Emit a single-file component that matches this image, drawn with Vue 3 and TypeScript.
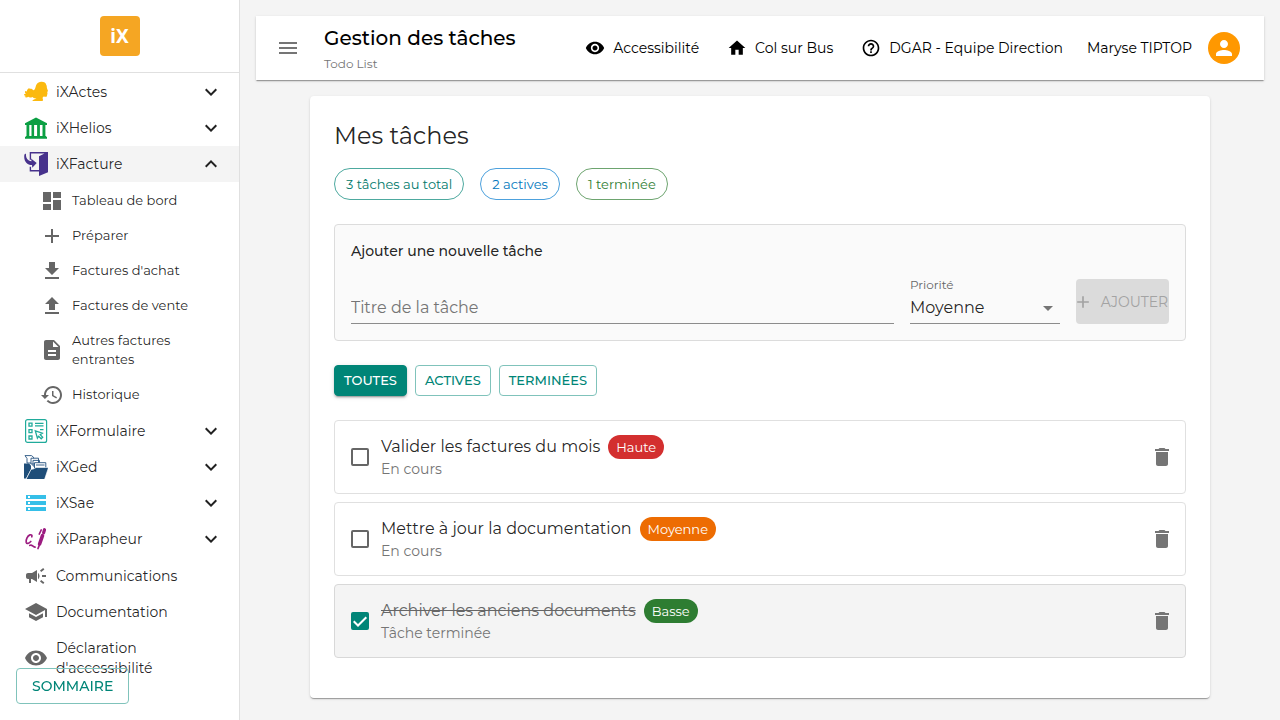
<script setup lang="ts">
import { computed, ref } from 'vue'

type Priority = 'Haute' | 'Moyenne' | 'Basse'
type Filter = 'all' | 'active' | 'done'

interface Task {
  id: number
  title: string
  priority: Priority
  done: boolean
}

const paths = {
  menu: 'M3 18h18v-2H3v2zm0-5h18v-2H3v2zm0-7v2h18V6H3z',
  dashboard: 'M3 13h8V3H3v10zm0 8h8v-6H3v6zm10 0h8V11h-8v10zm0-18v6h8V3h-8z',
  add: 'M19 13h-6v6h-2v-6H5v-2h6V5h2v6h6v2z',
  download: 'M19 9h-4V3H9v6H5l7 7 7-7zM5 18v2h14v-2H5z',
  upload: 'M5 20h14v-2H5v2zm0-10h4v6h6v-6h4l-7-7-7 7z',
  description:
    'M14 2H6c-1.1 0-1.99.9-1.99 2L4 20c0 1.1.89 2 1.99 2H18c1.1 0 2-.9 2-2V8l-6-6zm2 16H8v-2h8v2zm0-4H8v-2h8v2zm-3-5V3.5L18.5 9H13z',
  history:
    'M13 3c-4.97 0-9 4.03-9 9H1l3.89 3.89.07.14L9 12H6c0-3.87 3.13-7 7-7s7 3.13 7 7-3.13 7-7 7c-1.93 0-3.68-.79-4.94-2.06l-1.42 1.42C8.27 19.99 10.51 21 13 21c4.97 0 9-4.03 9-9s-4.03-9-9-9zm-1 5v5l4.28 2.54.72-1.21-3.5-2.08V8H12z',
  campaign:
    'M18 11v2h4v-2h-4zm-2 6.61c.96.71 2.21 1.65 3.2 2.39.4-.53.8-1.07 1.2-1.6-.99-.74-2.24-1.68-3.2-2.4-.4.54-.8 1.08-1.2 1.61zM20.4 5.6c-.4-.53-.8-1.07-1.2-1.6-.99.74-2.24 1.68-3.2 2.4.4.53.8 1.07 1.2 1.6.96-.72 2.21-1.65 3.2-2.4zM4 9c-1.1 0-2 .9-2 2v2c0 1.1.9 2 2 2h1v4h2v-4h1l5 3V6L8 9H4zm11.5 3c0-1.33-.58-2.53-1.5-3.35v6.69c.92-.81 1.5-2.01 1.5-3.34z',
  school: 'M5 13.18v4L12 21l7-3.82v-4L12 17l-7-3.82zM12 3L1 9l11 6 9-4.91V17h2V9L12 3z',
  eye: 'M12 4.5C7 4.5 2.73 7.61 1 12c1.73 4.39 6 7.5 11 7.5s9.27-3.11 11-7.5c-1.73-4.39-6-7.5-11-7.5zM12 17c-2.76 0-5-2.24-5-5s2.24-5 5-5 5 2.24 5 5-2.24 5-5 5zm0-8c-1.66 0-3 1.34-3 3s1.34 3 3 3 3-1.34 3-3-1.34-3-3-3z',
  home: 'M10 20v-6h4v6h5v-8h3L12 3 2 12h3v8z',
  help: 'M11 18h2v-2h-2v2zm1-16C6.48 2 2 6.48 2 12s4.48 10 10 10 10-4.48 10-10S17.52 2 12 2zm0 18c-4.41 0-8-3.59-8-8s3.59-8 8-8 8 3.59 8 8-3.59 8-8 8zm0-14c-2.21 0-4 1.79-4 4h2c0-1.1.9-2 2-2s2 .9 2 2c0 2-3 1.75-3 5h2c0-2.25 3-2.5 3-5 0-2.21-1.79-4-4-4z',
  person: 'M12 12c2.21 0 4-1.79 4-4s-1.79-4-4-4-4 1.79-4 4 1.79 4 4 4zm0 2c-2.67 0-8 1.34-8 4v2h16v-2c0-2.66-5.33-4-8-4z',
  trash: 'M6 19c0 1.1.9 2 2 2h8c1.1 0 2-.9 2-2V7H6v12zM19 4h-3.5l-1-1h-5l-1 1H5v2h14V4z',
  down: 'M7.41 8.59 12 13.17l4.59-4.58L18 10l-6 6-6-6 1.41-1.41z',
  up: 'M7.41 15.41 12 10.83l4.59 4.58L18 14l-6-6-6 6 1.41 1.41z',
  arrowDrop: 'M7 10l5 5 5-5z',
}

const modules = [
  { id: 'actes', label: 'iXActes' },
  { id: 'helios', label: 'iXHelios' },
  { id: 'facture', label: 'iXFacture' },
  { id: 'formulaire', label: 'iXFormulaire' },
  { id: 'ged', label: 'iXGed' },
  { id: 'sae', label: 'iXSae' },
  { id: 'parapheur', label: 'iXParapheur' },
]

const factureLinks = [
  { label: 'Tableau de bord', icon: paths.dashboard },
  { label: 'Préparer', icon: paths.add },
  { label: "Factures d'achat", icon: paths.download },
  { label: 'Factures de vente', icon: paths.upload },
  { label: 'Autres factures entrantes', icon: paths.description },
  { label: 'Historique', icon: paths.history },
]

const generalLinks = [
  { label: 'Communications', icon: paths.campaign },
  { label: 'Documentation', icon: paths.school },
  { label: "Déclaration d'accessibilité", icon: paths.eye },
]

const topLinks = [
  { label: 'Accessibilité', icon: paths.eye },
  { label: 'Col sur Bus', icon: paths.home },
  { label: 'DGAR - Equipe Direction', icon: paths.help },
]

const filters: { id: Filter; label: string }[] = [
  { id: 'all', label: 'TOUTES' },
  { id: 'active', label: 'ACTIVES' },
  { id: 'done', label: 'TERMINÉES' },
]

const priorities: Priority[] = ['Basse', 'Moyenne', 'Haute']

const factureOpen = ref(true)
const filter = ref<Filter>('all')
const newTitle = ref('')
const newPriority = ref<Priority>('Moyenne')
const tasks = ref<Task[]>([
  { id: 1, title: 'Valider les factures du mois', priority: 'Haute', done: false },
  { id: 2, title: 'Mettre à jour la documentation', priority: 'Moyenne', done: false },
  { id: 3, title: 'Archiver les anciens documents', priority: 'Basse', done: true },
])

const doneCount = computed(() => tasks.value.filter((t) => t.done).length)
const activeCount = computed(() => tasks.value.length - doneCount.value)
const visibleTasks = computed(() =>
  tasks.value.filter((t) => filter.value === 'all' || (filter.value === 'done') === t.done),
)

function toggleModule(id: string) {
  if (id === 'facture') factureOpen.value = !factureOpen.value
}

function addTask() {
  const title = newTitle.value.trim()
  if (!title) return
  tasks.value.push({ id: Date.now(), title, priority: newPriority.value, done: false })
  newTitle.value = ''
}

function removeTask(id: number) {
  tasks.value = tasks.value.filter((t) => t.id !== id)
}
</script>

<template>
  <div class="page">
    <aside class="sidebar">
      <div class="brand"><span class="logo">iX</span></div>
      <nav aria-label="Modules">
        <ul class="nav-list modules">
          <li v-for="m in modules" :key="m.id">
            <button
              type="button"
              class="nav-item"
              :class="{ selected: m.id === 'facture' && factureOpen }"
              @click="toggleModule(m.id)"
            >
              <svg v-if="m.id === 'actes'" class="icon" viewBox="0 0 24 24" aria-hidden="true">
                <path
                  fill="#fbb90f"
                  d="M11.500 7.200C12 4 14.300 1.900 17 1.800C20 1.600 21.800 2.900 22.300 4.900C23.100 6 22.600 7 23 8.300L24 11L23.200 11.900L23.500 13.200L22.900 15.900C22.500 17.300 21.300 16.800 19.900 16.600C18.600 17 18.300 18.300 19 19.400L18.700 21H8.300L9 20L12.500 18.200C10.500 18.500 9.300 17.900 8.500 16.900C7 17.600 5.300 18 4.300 16.800C3.200 17.800 1.400 17.700 .6 16.700L2 16C.8 16.100 -.1 15.200 0 14.300L1.900 13.700C.8 13 .7 11.700 1.400 10.900L2.800 11.400C3 9.600 4 8.300 5.500 8L5.500 9C7 8.300 8.500 9 9.300 10.300C10.500 9.800 11.200 8.800 11.500 7.200Z"
                />
              </svg>
              <svg v-else-if="m.id === 'helios'" class="icon" viewBox="0 0 24 24" aria-hidden="true">
                <path
                  fill="#0b9f43"
                  d="M12 1.500 23 7.300V9H1V7.300ZM2.500 9H5.300V20H2.500ZM7.500 9H10.100V20H7.500ZM13.100 9H15.900V20H13.100ZM18.500 9H21.400V20H18.500ZM1.700 20H22.300V21H23V22.700H1V21H1.700Z"
                />
              </svg>
              <svg v-else-if="m.id === 'facture'" class="icon" viewBox="0 0 24 24" aria-hidden="true">
                <path fill="#47328c" d="M5.700 0H24V20.200L15 24V19.500H5.700V14.700H7.100V18.100H15V4.300L20.500 1.400H7.100V7.800H5.700Z" />
                <path
                  fill="#47328c"
                  d="M.4 2.400 2 1.500C1.700 5.800 3.200 8.600 7.500 9.200L7 6.600 12.700 10.900 8.300 15.800 8 13.100C2.600 12.700-.6 8.800.4 2.400Z"
                />
              </svg>
              <svg v-else-if="m.id === 'formulaire'" class="icon" viewBox="0 0 24 24" aria-hidden="true">
                <g fill="none" stroke="#20ab9b">
                  <rect x="1.600" y=".6" width="21" height="22.800" rx="2" stroke-width="1.200" />
                  <path d="M5 4.200h3v3H5ZM5 10.600h3v3H5ZM5 17h3v3H5Z" stroke-width="1.300" />
                  <path d="M11 4.400h8.500M11 6.900h8.500M16 10.600h3.500" stroke-width="1.100" />
                  <path d="M11.300 11.800 18.400 14.200 16.200 15.700 18.700 18.300 17.200 19.800 14.700 17.200 13.400 19.200Z" stroke-width="1.300" />
                </g>
              </svg>
              <svg v-else-if="m.id === 'ged'" class="icon" viewBox="0 0 24 24" aria-hidden="true">
                <path fill="#fff" stroke="#24517f" stroke-width=".9" d="M1 .6H7.500L9.500 2.200V8H3V3.500Z" />
                <path fill="#fff" stroke="#24517f" stroke-width=".9" d="M7 3.200H14.500V9H7ZM9 5.400H15.500V11H9Z" />
                <path fill="#1f4e79" d="M0 8.500H5L7 10.500V14L2 23.400H0Z" />
                <path fill="#fff" stroke="#24517f" stroke-width=".9" d="M10.500 7.700H21.800V14H10.500Z" />
                <path stroke="#24517f" stroke-width=".9" d="M12 10H20.500" />
                <path fill="#1f4e79" stroke="#fff" stroke-width=".6" d="M7 14.500 10 13.800 12 12.500H24.500L20.500 24.500H2Z" />
              </svg>
              <svg v-else-if="m.id === 'sae'" class="icon" viewBox="0 0 24 24" aria-hidden="true">
                <path
                  fill="#35bfe8"
                  fill-rule="evenodd"
                  d="M2 4H22V8H2ZM4 5V7H6V5ZM2 10H22V14H2ZM4 11V13H6V11ZM2 16H22V20H2ZM4 17V19H6V17Z"
                />
              </svg>
              <svg v-else class="icon" viewBox="0 0 24 24" aria-hidden="true">
                <g fill="none" stroke="#9c1c80" stroke-linecap="round" stroke-linejoin="round">
                  <path
                    stroke-width="1.700"
                    d="M7.800 9.800C8.300 8.200 7.500 7.400 6 7.900C3.300 9 1.700 12.700 2.200 15.200C2.700 17.300 4.700 16.600 6.800 14.500M5.800 18.400C7.800 16.800 8.500 19.600 11 20.200"
                  />
                  <path stroke-width="3.200" d="M20.500 2.700 19.600 5.700" />
                  <path stroke-width="3.600" d="M18.500 8.600 15.600 17" />
                  <path stroke-width="1.700" d="M15.200 18.500 14 21.500M17.200 3 15.300 7" />
                </g>
              </svg>
              <span class="nav-label">{{ m.label }}</span>
              <svg class="icon chevron" viewBox="0 0 24 24" aria-hidden="true">
                <path :d="m.id === 'facture' && factureOpen ? paths.up : paths.down" />
              </svg>
            </button>
            <ul v-if="m.id === 'facture' && factureOpen" class="nav-list sub-list">
              <li v-for="link in factureLinks" :key="link.label">
                <a href="#" class="sub-item">
                  <svg class="icon" viewBox="0 0 24 24" aria-hidden="true"><path :d="link.icon" /></svg>
                  <span class="nav-label">{{ link.label }}</span>
                </a>
              </li>
            </ul>
          </li>
        </ul>
        <ul class="nav-list general">
          <li v-for="link in generalLinks" :key="link.label">
            <a href="#" class="nav-item">
              <svg class="icon" viewBox="0 0 24 24" aria-hidden="true"><path :d="link.icon" /></svg>
              <span class="nav-label">{{ link.label }}</span>
            </a>
          </li>
        </ul>
      </nav>
    </aside>

    <button type="button" class="summary">SOMMAIRE</button>

    <div class="content">
      <header class="topbar">
        <button type="button" class="icon-button" aria-label="Menu">
          <svg class="icon" viewBox="0 0 24 24" aria-hidden="true"><path :d="paths.menu" /></svg>
        </button>
        <div class="heading">
          <h1>Gestion des tâches</h1>
          <p>Todo List</p>
        </div>
        <div class="top-links">
          <a v-for="link in topLinks" :key="link.label" href="#" class="top-link">
            <svg class="icon small" viewBox="0 0 24 24" aria-hidden="true"><path :d="link.icon" /></svg>
            <span>{{ link.label }}</span>
          </a>
        </div>
        <a href="#" class="user">
          <span>Maryse TIPTOP</span>
          <span class="avatar">
            <svg class="icon" viewBox="0 0 24 24" aria-hidden="true"><path :d="paths.person" /></svg>
          </span>
        </a>
      </header>

      <main class="card">
        <h2>Mes tâches</h2>
        <div class="stats">
          <span class="stat total">{{ tasks.length }} tâches au total</span>
          <span class="stat active">{{ activeCount }} actives</span>
          <span class="stat done">{{ doneCount }} terminée</span>
        </div>

        <form class="add-form" @submit.prevent="addTask">
          <h3>Ajouter une nouvelle tâche</h3>
          <div class="fields">
            <input
              v-model="newTitle"
              class="field title-field"
              type="text"
              placeholder="Titre de la tâche"
              aria-label="Titre de la tâche"
            />
            <div class="priority">
              <label for="priority">Priorité</label>
              <div class="select-wrap">
                <select id="priority" v-model="newPriority" class="field">
                  <option v-for="p in priorities" :key="p">{{ p }}</option>
                </select>
                <svg class="icon" viewBox="0 0 24 24" aria-hidden="true"><path :d="paths.arrowDrop" /></svg>
              </div>
            </div>
            <button type="submit" class="add-button" :disabled="!newTitle.trim()">
              <svg class="icon small" viewBox="0 0 24 24" aria-hidden="true"><path :d="paths.add" /></svg>
              <span>AJOUTER</span>
            </button>
          </div>
        </form>

        <div class="filters">
          <button
            v-for="f in filters"
            :key="f.id"
            type="button"
            :class="{ current: filter === f.id }"
            :aria-pressed="filter === f.id"
            @click="filter = f.id"
          >
            {{ f.label }}
          </button>
        </div>

        <ul class="tasks">
          <li v-for="task in visibleTasks" :key="task.id" class="task" :class="{ finished: task.done }">
            <span class="check">
              <input :id="`task-${task.id}`" v-model="task.done" type="checkbox" />
              <svg v-if="task.done" viewBox="0 0 18 18" aria-hidden="true">
                <path d="M2.700 9.300 7 13.500 15.300 5.200" fill="none" stroke="#fff" stroke-width="2" />
              </svg>
            </span>
            <div class="task-text">
              <div class="task-head">
                <label :for="`task-${task.id}`">{{ task.title }}</label>
                <span class="badge" :class="task.priority.toLowerCase()">{{ task.priority }}</span>
              </div>
              <p>{{ task.done ? 'Tâche terminée' : 'En cours' }}</p>
            </div>
            <button type="button" class="icon-button" aria-label="Supprimer" @click="removeTask(task.id)">
              <svg class="icon" viewBox="0 0 24 24" aria-hidden="true"><path :d="paths.trash" /></svg>
            </button>
          </li>
        </ul>
      </main>
    </div>
  </div>
</template>

<style>
body {
  margin: 0;
  background: #f4f4f4;
}
</style>

<style scoped>
.page {
  display: flex;
  min-height: 100vh;
  background: #f4f4f4;
  color: rgba(0, 0, 0, 0.87);
  font-family: Montserrat, Inter, 'Open Sans', sans-serif;
  font-size: 14px;
}
.page * {
  box-sizing: border-box;
}
h1,
h2,
h3,
p,
ul {
  margin: 0;
  padding: 0;
}
ul {
  list-style: none;
}
a {
  color: inherit;
  text-decoration: none;
}
button,
input,
select {
  margin: 0;
  padding: 0;
  border: 0;
  border-radius: 0;
  background: none;
  color: inherit;
  font: inherit;
}
button {
  cursor: pointer;
}
.icon {
  display: block;
  flex: none;
  width: 24px;
  height: 24px;
  fill: currentColor;
}
.icon.small {
  width: 20px;
  height: 20px;
}

.sidebar {
  flex: none;
  width: 240px;
  border-right: 1px solid #e0e0e0;
  background: #fff;
}
.brand {
  display: flex;
  justify-content: center;
  padding: 16px;
  border-bottom: 1px solid #e0e0e0;
}
.logo {
  display: grid;
  place-items: center;
  width: 40px;
  height: 40px;
  border-radius: 4px;
  background: #f5a623;
  color: #fff;
  font-family: 'Noto Sans', 'Open Sans', sans-serif;
  font-size: 19px;
  font-weight: 700;
  line-height: 24px;
}
.modules {
  padding-top: 1px;
}
.general {
  padding-top: 1px;
}
.nav-item {
  display: flex;
  align-items: center;
  gap: 8px;
  width: 100%;
  padding: 8px 16px 8px 24px;
  line-height: 20px;
  text-align: left;
}
.nav-item .icon {
  margin: -2px 0;
}
.nav-item.selected {
  background: #f4f4f4;
}
.nav-label {
  flex: 1;
}
a.nav-item .icon,
.sub-item .icon {
  color: #666;
}
.sub-list {
  padding: 1px 0;
}
.sub-item {
  display: flex;
  align-items: center;
  gap: 8px;
  padding: 8px 48px 8px 40px;
  font-size: 13px;
  line-height: 19px;
}
.sub-item .icon {
  margin: -3px 0;
}
.summary {
  position: fixed;
  left: 16px;
  bottom: 16px;
  padding: 0 15px;
  border: 1px solid #80c3bb;
  border-radius: 4px;
  color: #008577;
  font-weight: 500;
  line-height: 34px;
}

.content {
  flex: 1;
  min-width: 0;
  padding: 16px;
}
.topbar {
  display: flex;
  align-items: center;
  height: 64px;
  padding: 0 24px 0 20px;
  background: #fff;
  box-shadow: 0 2px 1px -1px rgba(0, 0, 0, 0.2), 0 1px 1px rgba(0, 0, 0, 0.14), 0 1px 3px rgba(0, 0, 0, 0.12);
  color: #000;
}
.icon-button {
  color: #757575;
}
.heading {
  flex: 1;
  margin-left: 24px;
  padding-top: 2px;
}
h1 {
  font-size: 20px;
  font-weight: 500;
  line-height: 28px;
}
.heading p {
  margin-top: 2px;
  color: #757575;
  font-size: 12px;
  line-height: 20px;
}
.top-links {
  display: flex;
  gap: 28px;
}
.top-link,
.user {
  display: flex;
  align-items: center;
  gap: 8px;
}
.user {
  gap: 16px;
  margin-left: 24px;
}
.avatar {
  display: grid;
  place-items: center;
  width: 32px;
  height: 32px;
  border-radius: 50%;
  background: #ff9800;
  color: #fff;
}

.card {
  max-width: 900px;
  margin: 16px auto 0;
  padding: 24px 24px 40px;
  border-radius: 4px;
  background: #fff;
  box-shadow: 0 2px 1px -1px rgba(0, 0, 0, 0.2), 0 1px 1px rgba(0, 0, 0, 0.14), 0 1px 3px rgba(0, 0, 0, 0.12);
}
h2 {
  font-size: 24px;
  font-weight: 400;
  line-height: 32px;
}
.stats {
  display: flex;
  gap: 16px;
  margin-top: 16px;
}
.stat {
  padding: 0 11px;
  border: 1px solid;
  border-radius: 16px;
  font-size: 13px;
  line-height: 30px;
}
.stat.total {
  border-color: #4da99f;
  color: #00796b;
}
.stat.active {
  border-color: #4da1dd;
  color: #0277bd;
}
.stat.done {
  border-color: #6da46f;
  color: #2e7d32;
}

.add-form {
  margin-top: 24px;
  padding: 16px;
  border: 1px solid #dcdcdc;
  border-radius: 4px;
  background: #fafafa;
}
h3 {
  font-size: 14px;
  font-weight: 500;
  line-height: 21px;
}
.fields {
  display: flex;
  align-items: flex-end;
  gap: 16px;
  margin-top: 16px;
}
.field {
  width: 100%;
  height: 32px;
  border-bottom: 1px solid #8c8c8c;
  font-size: 16px;
  outline: 0;
}
.title-field {
  flex: 1;
  min-width: 0;
}
.title-field::placeholder {
  color: #757575;
  opacity: 1;
}
.priority {
  flex: none;
  width: 150px;
}
.priority label {
  display: block;
  color: #666;
  font-size: 12px;
  line-height: 14px;
}
.select-wrap {
  display: grid;
  align-items: center;
}
.select-wrap > * {
  grid-area: 1 / 1;
}
.select-wrap select {
  appearance: none;
}
.select-wrap .icon {
  justify-self: end;
  color: #757575;
  pointer-events: none;
}
.add-button {
  display: flex;
  flex: none;
  align-items: center;
  justify-content: center;
  gap: 8px;
  width: 93px;
  height: 45px;
  border-radius: 4px;
  background: #00897b;
  color: #fff;
}
.add-button .icon {
  margin-left: -4px;
}
.add-button:disabled {
  background: #dbdbdb;
  color: #a3a3a3;
  cursor: default;
}

.filters {
  display: flex;
  gap: 8px;
  margin-top: 24px;
}
.filters button {
  padding: 0 9px;
  border: 1px solid #80c3bb;
  border-radius: 4px;
  color: #008577;
  font-size: 13px;
  font-weight: 500;
  line-height: 29px;
}
.filters .current {
  border-color: #008577;
  background: #008577;
  box-shadow: 0 3px 1px -2px rgba(0, 0, 0, 0.2), 0 2px 2px rgba(0, 0, 0, 0.14), 0 1px 5px rgba(0, 0, 0, 0.12);
  color: #fff;
}

.tasks {
  display: grid;
  gap: 8px;
  margin-top: 24px;
}
.task {
  display: flex;
  align-items: center;
  padding: 13px 11px 13px 16px;
  border: 1px solid #e0e0e0;
  border-radius: 4px;
}
.task.finished {
  border-color: #d8d8d8;
  background: #f4f4f4;
}
.check {
  display: grid;
  flex: none;
  width: 18px;
  height: 18px;
}
.check > * {
  grid-area: 1 / 1;
}
.check input {
  appearance: none;
  width: 18px;
  height: 18px;
  border: 2px solid #666;
  border-radius: 2px;
}
.check input:checked {
  border-color: #008577;
  background: #008577;
}
.check svg {
  pointer-events: none;
}
.task-text {
  flex: 1;
  margin-left: 12px;
  padding-bottom: 2px;
}
.task-head {
  display: flex;
  align-items: center;
  gap: 8px;
  font-size: 16px;
  line-height: 26px;
}
.task-text p {
  color: #757575;
  line-height: 18px;
}
.finished label {
  color: #666;
  text-decoration: line-through;
}
.badge {
  padding: 0 8px;
  border-radius: 12px;
  color: #fff;
  font-size: 13px;
  line-height: 24px;
}
.badge.haute {
  background: #d32f2f;
}
.badge.moyenne {
  background: #ed6c02;
}
.badge.basse {
  background: #2e7d32;
}
</style>
